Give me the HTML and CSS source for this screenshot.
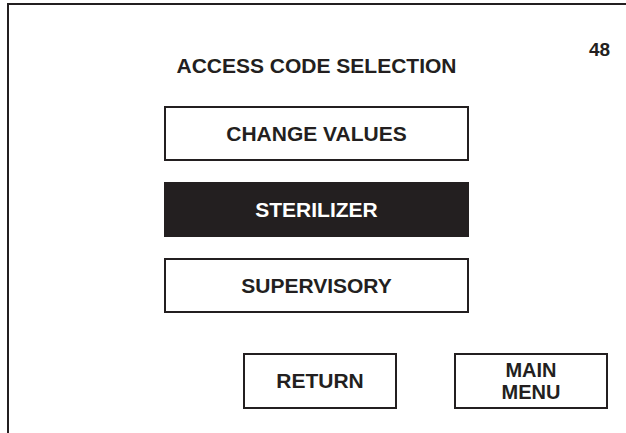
FILE: index.html
```html
<!DOCTYPE html>
<html lang="en">
<head>
    <meta charset="UTF-8">
    <meta name="viewport" content="width=device-width, initial-scale=1.0">
    <title>Access Code Selection</title>
    <link rel="stylesheet" href="styles.css">
</head>
<body>

<div class="screen">
    <div class="header">
        <div class="title">ACCESS CODE SELECTION</div>
        <div class="page-no">48</div>
    </div>

    <div class="menu">
        <div class="key">CHANGE VALUES</div>
        <div class="key selected">STERILIZER</div>
        <div class="key">SUPERVISORY</div>
    </div>

    <div class="nav">
        <div class="key small">RETURN</div>
        <div class="key small two-line">MAIN<br>MENU</div>
    </div>
</div>

</body>
</html>
```

FILE: styles.css
```css
body {
    margin: 0;
    padding: 0;
    width: 626px;
    height: 433px;
    overflow: hidden;
    background-color: #fff;
    font-family: 'Liberation Sans', Arial, sans-serif;
    font-weight: bold;
    font-size: 21px;
    line-height: 20px;
    color: #231f20;
}

.screen {
    margin: 3px 0 0 7px;
    height: 440px;
    border-top: 2px solid #231f20;
    border-left: 2px solid #231f20;
    padding-left: 155px;
}

.header {
    display: flex;
    align-items: flex-start;
    padding-top: 35px;
}

.title {
    width: 305px;
    margin-top: 16px;
    text-align: center;
}

.page-no {
    margin-left: 120px;
    font-size: 19px;
}

.menu {
    display: flex;
    flex-direction: column;
    gap: 21px;
    width: 305px;
    margin-top: 30px;
}

.key {
    box-sizing: border-box;
    height: 55px;
    border: 2px solid #231f20;
    display: flex;
    align-items: center;
    justify-content: center;
    text-align: center;
}

.selected {
    background-color: #231f20;
    color: #fff;
}

.nav {
    display: flex;
    gap: 57px;
    margin-top: 40px;
    margin-left: 79px;
}

.small {
    width: 154px;
    height: 56px;
}

.two-line {
    font-size: 20px;
    line-height: 22px;
}
```
